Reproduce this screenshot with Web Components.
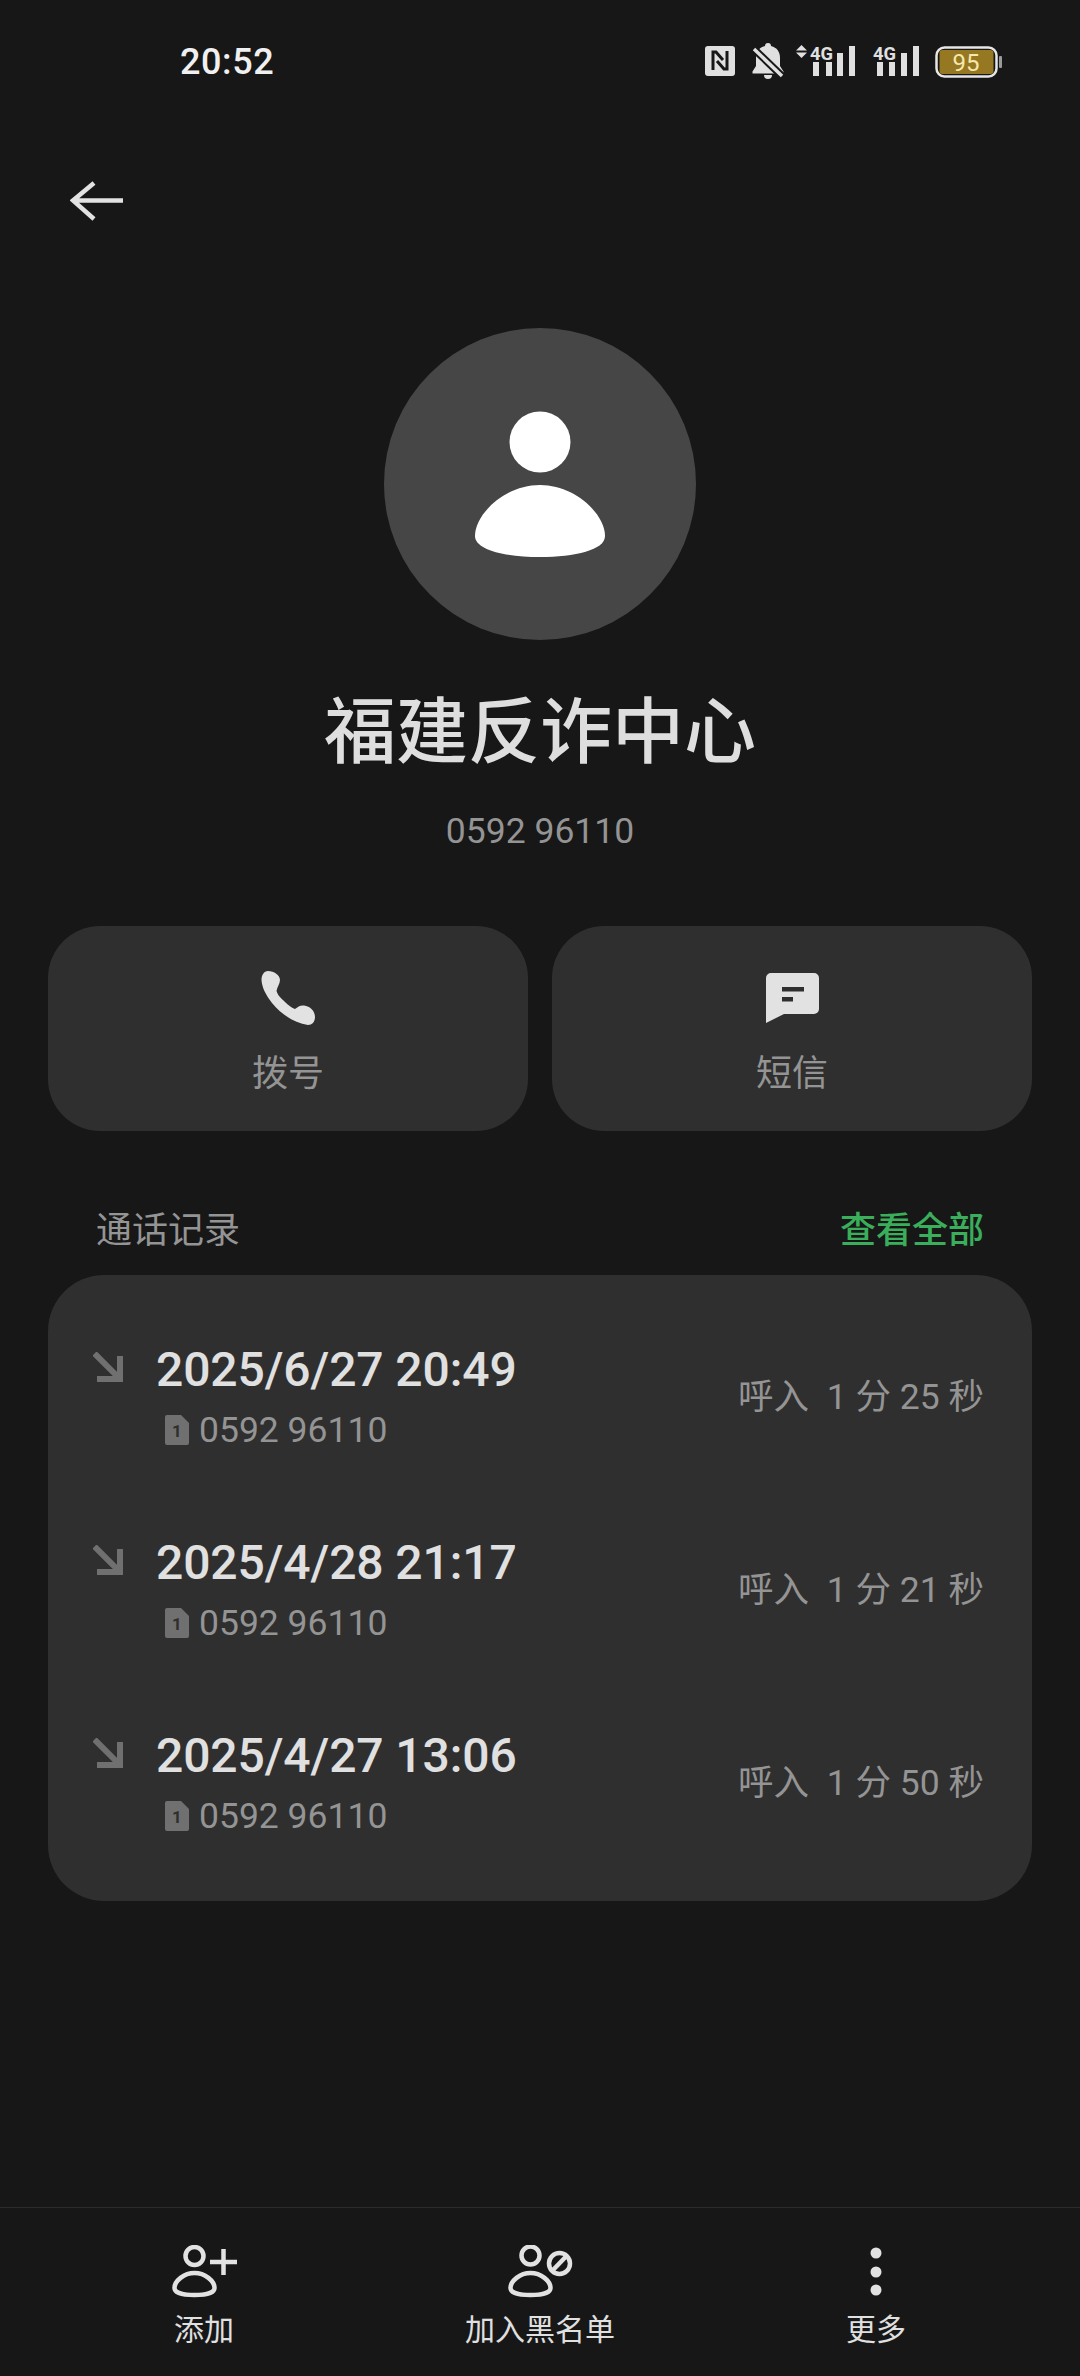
<!DOCTYPE html>
<html lang="zh">
<head>
<meta charset="utf-8">
<title>福建反诈中心</title>
<style>
    html, body { margin: 0; padding: 0; background: #171717; }
    body { font-family: Roboto, "Noto Sans CJK SC", sans-serif; }
</style>
</head>
<body>
<contact-page>
    <status-bar slot="status" time="20:52"></status-bar>
    <back-nav slot="nav"></back-nav>
    <contact-header slot="header" name="福建反诈中心" number="0592 96110"></contact-header>
    <action-button slot="actions" icon="phone" label="拨号"></action-button>
    <action-button slot="actions" icon="message" label="短信"></action-button>
    <call-log slot="log">
        <call-row date="2025/6/27 20:49" number="0592 96110" mins="1" secs="25"></call-row>
        <call-row date="2025/4/28 21:17" number="0592 96110" mins="1" secs="21"></call-row>
        <call-row date="2025/4/27 13:06" number="0592 96110" mins="1" secs="50"></call-row>
    </call-log>
    <bottom-action slot="bottom" icon="add" label="添加"></bottom-action>
    <bottom-action slot="bottom" icon="block" label="加入黑名单"></bottom-action>
    <bottom-action slot="bottom" icon="more" label="更多"></bottom-action>
</contact-page>

<script>
const FONT = 'Roboto, "Noto Sans CJK SC", sans-serif';

const ICONS = {
    phone: `<svg width="56" height="56" viewBox="0 0 56 56"><path fill="#e2e2e2" d="M8 1C14 1 20 5 20 10C20 14 17 17 16.500 21C18 26 22 29 25 32C28 35 32 38 35 39C38 37 40 35 44 35.500C50 36 55 41 55 47C55 52 52 55 48 55C34 53 21 44 12 33C6 25 2 18 1.500 10C1.500 5 4 1 8 1z"/></svg>`,
    message: `<svg width="53" height="50" viewBox="0 0 53 50"><path fill="#e2e2e2" fill-rule="evenodd" d="M5 0h43a5 5 0 0 1 5 5v31a5 5 0 0 1-5 5H18L0 50V5a5 5 0 0 1 5-5zM16 14v4.500h22V14zM16 24v4.500h11V24z"/></svg>`,
    add: `<svg width="66" height="54" viewBox="0 0 66 54" fill="none" stroke="#e2e2e2" stroke-width="4.500"><circle cx="23.500" cy="11" r="9"/><path d="M23.500 28C13 28 3.500 36 3.500 43C3.500 48 13 50 23.500 50S43.500 48 43.500 43C43.500 36 34 28 23.500 28z"/><path d="M39 17h27M52.500 4v26"/></svg>`,
    block: `<svg width="68" height="54" viewBox="0 0 68 54" fill="none" stroke="#e2e2e2" stroke-width="4.500"><circle cx="24.500" cy="10.500" r="9"/><path d="M24.500 28C14 28 4.500 36 4.500 43C4.500 48 14 50 24.500 50S44.500 48 44.500 43C44.500 36 35 28 24.500 28z"/><circle cx="53.500" cy="18.500" r="10.500"/><path d="M46.500 25.500L60.500 11"/></svg>`,
    more: `<svg width="12" height="54" viewBox="0 0 12 54" fill="#e2e2e2"><circle cx="6" cy="8" r="5.500"/><circle cx="6" cy="27" r="5.500"/><circle cx="6" cy="45" r="5.500"/></svg>`
};

function define(name, css, html) {
    customElements.define(name, class extends HTMLElement {
        constructor() {
            super();
            this.attachShadow({ mode: 'open' });
        }
        connectedCallback() {
            const get = (key) => this.getAttribute(key) || '';
            this.shadowRoot.innerHTML = `<style>${css}</style>${html(get)}`;
        }
    });
}

define('contact-page', `
    :host { display: flex; flex-direction: column; width: 1080px; height: 2376px; overflow: hidden; background: #171717; font-family: ${FONT}; }
    .actions { display: grid; grid-template-columns: 1fr 1fr; gap: 24px; padding: 0 48px; margin-top: 73px; }
    .bottom { display: grid; grid-template-columns: repeat(3, 336px); padding: 0 36px; margin-top: auto; height: 168px; border-top: 1px solid #2b2b2b; }
`, () => `
    <slot name="status"></slot>
    <slot name="nav"></slot>
    <slot name="header"></slot>
    <div class="actions"><slot name="actions"></slot></div>
    <slot name="log"></slot>
    <div class="bottom"><slot name="bottom"></slot></div>
`);

define('status-bar', `
    :host { display: flex; align-items: center; height: 122px; padding: 2px 78px 0 180px; box-sizing: border-box; color: #f0f0f0; }
    .time { font-size: 36px; font-weight: 500; letter-spacing: .6px; flex: 1; }
    .icons { display: flex; align-items: center; }
    svg { display: block; }
    text { font-family: Roboto, sans-serif; }
`, (get) => `
    <span class="time">${get('time')}</span>
    <div class="icons">
        <svg width="297" height="38" viewBox="0 -2 297 38">
            <!-- nfc -->
            <rect x="0" y="1" width="30" height="30" rx="3" fill="#e0e0e0"/>
            <path d="M8 25V7h3L18 15M22 6V24h-3L12 16" fill="none" stroke="#171717" stroke-width="3"/>
            <!-- muted bell -->
            <path fill="#e0e0e0" d="M63-2c2 0 3 1 3 3c6 1.500 9 6 9 12v8l3.500 5.500v2H47.500v-2l3.500-5.500v-8c0-6 3-10.500 9-12c0-2 1-3 3-3zM59 30h8a4 4 0 0 1-8 0z"/>
            <path d="M49 4l28 27" stroke="#171717" stroke-width="7.500"/>
            <path d="M49 4l28 27" stroke="#e0e0e0" stroke-width="3.500"/>
            <!-- sim 1 -->
            <path fill="#e0e0e0" d="M91 5.500L96.500 0 102 5.500zM91 7.500L96.500 13 102 7.500z"/>
            <text x="105" y="14.500" font-size="19" font-weight="700" fill="#e0e0e0" textLength="23" lengthAdjust="spacingAndGlyphs">4G</text>
            <g fill="#e0e0e0"><rect x="108" y="17" width="6" height="14"/><rect x="121" y="17" width="6" height="14"/><rect x="132" y="8" width="6" height="23"/><rect x="144" y="1" width="6" height="30"/></g>
            <!-- sim 2 -->
            <text x="168" y="14.500" font-size="19" font-weight="700" fill="#e0e0e0" textLength="23" lengthAdjust="spacingAndGlyphs">4G</text>
            <g fill="#e0e0e0"><rect x="172" y="17" width="6" height="14"/><rect x="184" y="17" width="6" height="14"/><rect x="196" y="8" width="6" height="23"/><rect x="208" y="1" width="6" height="30"/></g>
            <!-- battery -->
            <rect x="231.500" y="2.500" width="60" height="29" rx="8" fill="none" stroke="#e6e6e6" stroke-width="2.500"/>
            <rect x="234.500" y="5" width="54" height="24" rx="3" fill="#967722"/>
            <rect x="294" y="11" width="3" height="12" rx="1" fill="#9a9a9a"/>
            <text x="261" y="25.500" font-size="24" fill="#f6e8ac" text-anchor="middle">95</text>
        </svg>
    </div>
`);

define('back-nav', `
    :host { display: flex; align-items: center; height: 158px; padding-left: 70px; }
    svg { display: block; }
`, () => `
    <svg width="54" height="40" viewBox="0 0 54 40" fill="none" stroke="#e2e2e2" stroke-width="4.500"><path d="M24 2L3 19.500 24 38M3 19.500h50"/></svg>
`);

define('contact-header', `
    :host { display: flex; flex-direction: column; align-items: center; margin-top: 48px; }
    .avatar { width: 312px; height: 312px; border-radius: 50%; background: #464646; display: flex; align-items: center; justify-content: center; }
    svg { display: block; }
    .name { font-size: 72px; line-height: 92px; font-weight: 500; color: #dedede; margin-top: 47px; }
    .number { font-size: 35.500px; line-height: 44px; color: #949494; margin-top: 30px; }
`, (get) => `
    <div class="avatar">
        <svg width="132" height="147" viewBox="0 0 132 147" fill="#fff"><circle cx="66" cy="31" r="30.500"/><path d="M66 74C31 74 1 103 1 125c0 14 30 21 65 21s65-7 65-21c0-22-30-51-65-51z"/></svg>
    </div>
    <div class="name">${get('name')}</div>
    <div class="number">${get('number')}</div>
`);

define('action-button', `
    :host { display: flex; flex-direction: column; align-items: center; height: 205px; border-radius: 52px; background: #2f2f2f; box-sizing: border-box; padding-top: 44px; }
    .icon { height: 56px; display: flex; align-items: center; }
    svg { display: block; }
    .label { font-size: 36px; line-height: 48px; color: #949494; margin-top: 24px; }
`, (get) => `
    <div class="icon">${ICONS[get('icon')]}</div>
    <div class="label">${get('label')}</div>
`);

define('call-log', `
    :host { display: block; padding: 0 48px; margin-top: 71px; }
    .head { display: flex; justify-content: space-between; align-items: center; padding: 0 48px; height: 50px; font-size: 36px; }
    .title { color: #949494; }
    .all { color: #3aae5b; font-weight: 500; }
    .card { margin-top: 23px; background: #2f2f2f; border-radius: 56px; padding: 47px 48px 0; }
`, () => `
    <div class="head"><span class="title">通话记录</span><span class="all">查看全部</span></div>
    <div class="card"><slot></slot></div>
`);

define('call-row', `
    :host { display: flex; align-items: flex-start; height: 193px; }
    svg { display: block; }
    .arrow { margin: 30px 0 0 -3px; width: 63px; flex: none; }
    .main { flex: 1; }
    .date { font-size: 48px; line-height: 56px; font-weight: 500; letter-spacing: -.1px; color: #e0e0e0; margin-top: 20px; }
    .sub { display: flex; align-items: center; margin: 10px 0 0 9px; font-size: 35.500px; line-height: 44px; color: #949494; }
    .sub svg { margin-right: 10px; }
    .call { font-size: 35.500px; line-height: 44px; color: #949494; margin-top: 53px; white-space: pre; }
`, (get) => `
    <div class="arrow"><svg width="30" height="30" viewBox="0 0 30 30" fill="none" stroke="#707070" stroke-width="6"><path d="M1.500 1.500L26 26M4 27h23V4"/></svg></div>
    <div class="main">
        <div class="date">${get('date')}</div>
        <div class="sub"><svg width="24" height="30" viewBox="0 0 24 30"><path fill="#707070" d="M2 0h14l8 8v20a2 2 0 0 1-2 2H2a2 2 0 0 1-2-2V2a2 2 0 0 1 2-2z"/><text x="12" y="22" font-family="Roboto, sans-serif" font-size="17" font-weight="700" fill="#2f2f2f" text-anchor="middle">1</text></svg>${get('number')}</div>
    </div>
    <div class="call">呼入 ${' '}${get('mins')} 分 ${get('secs')} 秒</div>
`);

define('bottom-action', `
    :host { display: flex; flex-direction: column; align-items: center; padding-top: 37px; }
    .icon { height: 54px; }
    svg { display: block; }
    .label { font-size: 30px; line-height: 40px; color: #e0e0e0; margin-top: 11px; }
`, (get) => `
    <div class="icon">${ICONS[get('icon')]}</div>
    <div class="label">${get('label')}</div>
`);
</script>
</body>
</html>
